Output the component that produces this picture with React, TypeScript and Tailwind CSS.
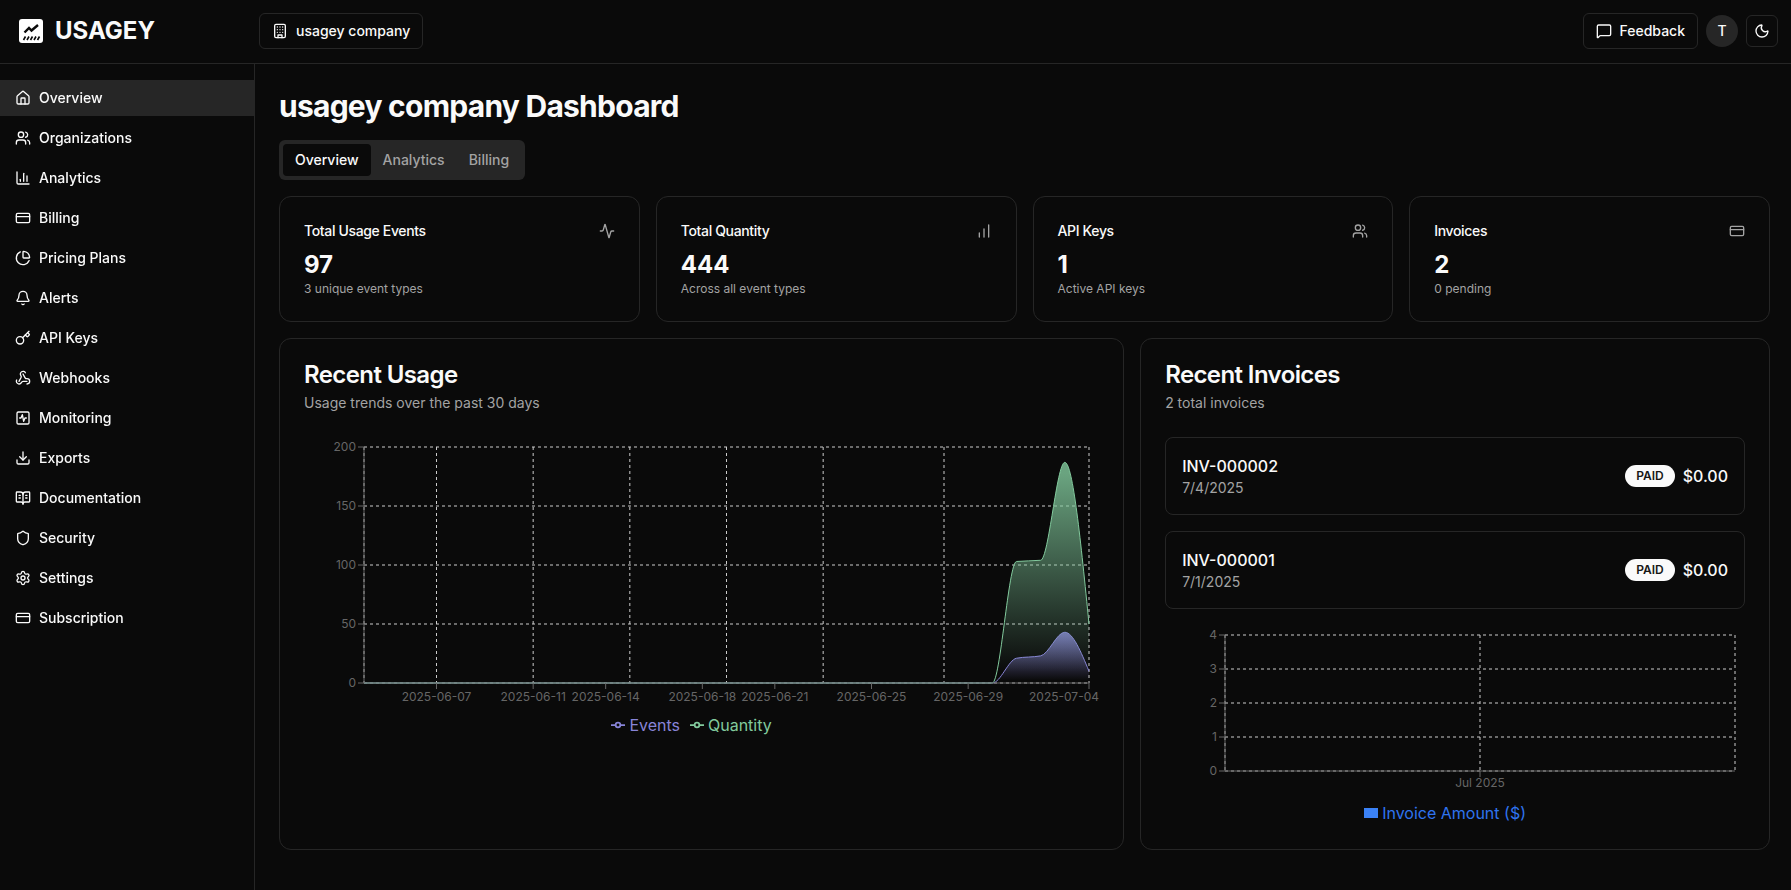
import {
  Activity,
  BarChart,
  BookOpenText,
  ChartColumn,
  ChartPie,
  CreditCard,
  Bell,
  Download,
  House,
  Key,
  MessageSquare,
  Moon,
  Settings,
  Shield,
  SquareActivity,
  Users,
  Webhook,
  type LucideIcon,
} from "lucide-react";

const navItems: { label: string; icon: LucideIcon; active?: boolean }[] = [
  { label: "Overview", icon: House, active: true },
  { label: "Organizations", icon: Users },
  { label: "Analytics", icon: ChartColumn },
  { label: "Billing", icon: CreditCard },
  { label: "Pricing Plans", icon: ChartPie },
  { label: "Alerts", icon: Bell },
  { label: "API Keys", icon: Key },
  { label: "Webhooks", icon: Webhook },
  { label: "Monitoring", icon: SquareActivity },
  { label: "Exports", icon: Download },
  { label: "Documentation", icon: BookOpenText },
  { label: "Security", icon: Shield },
  { label: "Settings", icon: Settings },
  { label: "Subscription", icon: CreditCard },
];

const stats: { title: string; value: string; note: string; icon: LucideIcon }[] = [
  { title: "Total Usage Events", value: "97", note: "3 unique event types", icon: Activity },
  { title: "Total Quantity", value: "444", note: "Across all event types", icon: BarChart },
  { title: "API Keys", value: "1", note: "Active API keys", icon: Users },
  { title: "Invoices", value: "2", note: "0 pending", icon: CreditCard },
];

const invoices = [
  { number: "INV-000002", date: "7/4/2025" },
  { number: "INV-000001", date: "7/1/2025" },
];

// usage chart geometry, same layout as a recharts 795x300 box
const plot = { left: 60, right: 785, top: 10, bottom: 246 };
const dayX = (day: number) => plot.left + ((plot.right - plot.left) * day) / 30;
const valueY = (value: number) => plot.bottom - ((plot.bottom - plot.top) * value) / 200;

const gridDays = [0, 3, 7, 11, 15, 19, 24, 30];
const tickDays = [
  { day: 3, label: "2025-06-07" },
  { day: 7, label: "2025-06-11" },
  { day: 10, label: "2025-06-14" },
  { day: 14, label: "2025-06-18" },
  { day: 17, label: "2025-06-21" },
  { day: 21, label: "2025-06-25" },
  { day: 25, label: "2025-06-29" },
];

const zeros = new Array(27).fill(0) as number[];
const eventSeries = [...zeros, 21, 23, 43, 10];
const quantitySeries = [...zeros, 103, 104, 187, 50];

// monotone cubic curve through the points (d3 curveMonotoneX)
function monotonePath(values: number[]) {
  const xs = values.map((_, i) => dayX(i));
  const ys = values.map(valueY);
  const n = xs.length;
  const slopes: number[] = [];
  for (let i = 0; i < n - 1; i++) slopes.push((ys[i + 1] - ys[i]) / (xs[i + 1] - xs[i]));
  const tangents = xs.map((_, i) => {
    if (i === 0 || i === n - 1) return NaN;
    const a = slopes[i - 1];
    const b = slopes[i];
    const p = (a + b) / 2;
    return (Math.sign(a) + Math.sign(b)) * Math.min(Math.abs(a), Math.abs(b), 0.5 * Math.abs(p)) || 0;
  });
  tangents[0] = (3 * slopes[0] - tangents[1]) / 2;
  tangents[n - 1] = (3 * slopes[n - 2] - tangents[n - 2]) / 2;
  let d = `M${xs[0]},${ys[0]}`;
  for (let i = 0; i < n - 1; i++) {
    const h = (xs[i + 1] - xs[i]) / 3;
    d += `C${xs[i] + h},${ys[i] + h * tangents[i]} ${xs[i + 1] - h},${ys[i + 1] - h * tangents[i + 1]} ${xs[i + 1]},${ys[i + 1]}`;
  }
  return d;
}

function UsageArea({ values, color, id }: { values: number[]; color: string; id: string }) {
  const line = monotonePath(values);
  return (
    <g>
      <defs>
        <linearGradient id={id} x1="0" y1="0" x2="0" y2="1">
          <stop offset="5%" stopColor={color} stopOpacity={0.8} />
          <stop offset="95%" stopColor={color} stopOpacity={0} />
        </linearGradient>
      </defs>
      <path d={`${line}L${plot.right},${plot.bottom}L${plot.left},${plot.bottom}Z`} fill={`url(#${id})`} />
      <path d={line} fill="none" stroke={color} strokeWidth={1} />
    </g>
  );
}

function UsageChart() {
  return (
    <div className="flex flex-col">
      <svg width={795} height={276} className="block" fontSize={12}>
        <g stroke="#ccc" strokeDasharray="3 3" fill="none">
          {[0, 50, 100, 150, 200].map((v) => (
            <line key={v} x1={plot.left} x2={plot.right} y1={valueY(v)} y2={valueY(v)} />
          ))}
          {gridDays.map((d) => (
            <line key={d} x1={dayX(d)} x2={dayX(d)} y1={plot.top} y2={plot.bottom} />
          ))}
        </g>
        <UsageArea values={eventSeries} color="#8884d8" id="usageEvents" />
        <UsageArea values={quantitySeries} color="#82ca9d" id="usageQuantity" />
        <g stroke="#666" fill="none">
          <line x1={plot.left} x2={plot.left} y1={plot.top} y2={plot.bottom} />
          <line x1={plot.left} x2={plot.right} y1={plot.bottom} y2={plot.bottom} />
          {[0, 50, 100, 150, 200].map((v) => (
            <line key={v} x1={plot.left - 6} x2={plot.left} y1={valueY(v)} y2={valueY(v)} />
          ))}
          {[...tickDays.map((t) => t.day), 30].map((d) => (
            <line key={d} x1={dayX(d)} x2={dayX(d)} y1={plot.bottom} y2={plot.bottom + 6} />
          ))}
        </g>
        <g fill="#666">
          {[0, 50, 100, 150, 200].map((v) => (
            <text key={v} x={plot.left - 8} y={valueY(v) + 4} textAnchor="end">
              {v}
            </text>
          ))}
          {tickDays.map((t) => (
            <text key={t.day} x={dayX(t.day)} y={plot.bottom + 18} textAnchor="middle">
              {t.label}
            </text>
          ))}
          <text x={795} y={plot.bottom + 18} textAnchor="end">
            2025-07-04
          </text>
        </g>
      </svg>
      <div className="flex h-6 items-center justify-center gap-2.5 pr-5 text-base">
        <LegendLine color="#8884d8" label="Events" textClass="text-[#8884d8]" />
        <LegendLine color="#82ca9d" label="Quantity" textClass="text-[#82ca9d]" />
      </div>
    </div>
  );
}

function LegendLine({ color, label, textClass }: { color: string; label: string; textClass: string }) {
  return (
    <span className="flex items-center gap-1">
      <svg width={14} height={14} viewBox="0 0 32 32" fill="none">
        <path d="M0 16h10.67M21.33 16H32" stroke={color} strokeWidth={4} />
        <circle cx={16} cy={16} r={5.33} stroke={color} strokeWidth={4} />
      </svg>
      <span className={textClass}>{label}</span>
    </span>
  );
}

function InvoiceChart() {
  const ys = [10, 44, 78, 112, 146];
  return (
    <div className="flex flex-col">
      <svg width={580} height={176} className="block" fontSize={12}>
        <g stroke="#ccc" strokeDasharray="3 3" fill="none">
          {ys.map((y) => (
            <line key={y} x1={60} x2={570} y1={y} y2={y} />
          ))}
          {[60, 315, 570].map((x) => (
            <line key={x} x1={x} x2={x} y1={10} y2={146} />
          ))}
        </g>
        <g stroke="#666" fill="none">
          <line x1={60} x2={60} y1={10} y2={146} />
          <line x1={60} x2={570} y1={146} y2={146} />
          <line x1={315} x2={315} y1={146} y2={152} />
          {ys.map((y) => (
            <line key={y} x1={54} x2={60} y1={y} y2={y} />
          ))}
        </g>
        <g fill="#666">
          {ys.map((y, i) => (
            <text key={y} x={52} y={y + 4} textAnchor="end">
              {4 - i}
            </text>
          ))}
          <text x={315} y={162} textAnchor="middle">
            Jul 2025
          </text>
        </g>
      </svg>
      <div className="flex h-6 items-center justify-center gap-1 pr-5 text-base text-[#2f74f0]">
        <span className="h-[10.5px] w-3.5 bg-[#3b82f6]" />
        <span>Invoice Amount ($)</span>
      </div>
    </div>
  );
}

function Logo() {
  return (
    <svg width={24} height={24} viewBox="0 0 24 24" className="shrink-0">
      <rect width={24} height={24} rx={3} fill="#fff" />
      <path d="M5.5 13.5 10 9l2.5 2.5L19 6" fill="none" stroke="#0a0a0a" strokeWidth={2.4} />
      <path
        d="M4.5 21 6.5 17.5M8 21l2-3.5M11.5 21l2-3.5M15 21l2-3.5M18.5 21l2-3.5"
        fill="none"
        stroke="#0a0a0a"
        strokeWidth={1.6}
      />
    </svg>
  );
}

function BuildingIcon() {
  return (
    <svg
      width={16}
      height={16}
      viewBox="0 0 24 24"
      fill="none"
      stroke="currentColor"
      strokeWidth={2}
      strokeLinecap="round"
      strokeLinejoin="round"
    >
      <rect width={16} height={20} x={4} y={2} rx={2} ry={2} />
      <path d="M9 22v-4h6v4" />
      <path d="M8 6h.01M12 6h.01M16 6h.01M8 10h.01M12 10h.01M16 10h.01M8 14h.01M12 14h.01M16 14h.01" />
    </svg>
  );
}

export default function App() {
  return (
    <div className="flex h-screen flex-col overflow-hidden bg-[#0a0a0a] text-[#fafafa] [font-family:Inter,sans-serif]">
      <header className="flex h-16 shrink-0 items-center justify-between border-b border-[#262626] pb-px pl-[19px] pr-[13px]">
        <div className="flex items-center">
          <div className="flex w-[240px] items-center gap-3">
            <Logo />
            <span className="text-2xl font-bold">USAGEY</span>
          </div>
          <button className="flex h-9 items-center gap-2 rounded-md border border-[#262626] px-[12px] text-sm font-medium">
            <BuildingIcon />
            usagey company
          </button>
        </div>
        <div className="flex items-center gap-2">
          <button className="flex h-9 items-center gap-2 rounded-md border border-[#262626] px-3 text-sm font-medium">
            <MessageSquare className="h-4 w-4" />
            Feedback
          </button>
          <div className="flex h-8 w-8 items-center justify-center rounded-full bg-[#262626] text-sm font-medium">T</div>
          <button className="flex h-8 w-8 items-center justify-center rounded-md border border-[#262626]">
            <Moon className="h-4 w-4" />
          </button>
        </div>
      </header>

      <div className="flex min-h-0 flex-1">
        <aside className="w-[255px] shrink-0 border-r border-[#262626] pt-4">
          <nav className="flex flex-col gap-1 will-change-transform">
            {navItems.map((item) => (
              <a
                key={item.label}
                className={`flex h-9 items-center gap-2 px-[15px] text-sm font-medium ${item.active ? "bg-[#262626]" : ""}`}
              >
                <item.icon className="h-4 w-4" />
                {item.label}
              </a>
            ))}
          </nav>
        </aside>

        <main className="min-w-0 flex-1 pl-6 pr-[21px] pt-6">
          <h1 className="mb-4 text-3xl font-bold tracking-tight">usagey company Dashboard</h1>

          <div className="mb-4 inline-flex h-10 items-center rounded-md bg-[#262626] p-1 text-sm font-medium text-[#a3a3a3]">
            <span className="flex h-8 items-center rounded-sm bg-[#0a0a0a] px-3 text-[#fafafa]">Overview</span>
            <span className="flex h-8 items-center px-3">Analytics</span>
            <span className="flex h-8 items-center px-3">Billing</span>
          </div>

          <div className="grid grid-cols-4 gap-4">
            {stats.map((stat) => (
              <div key={stat.title} className="rounded-xl border border-[#262626] p-6">
                <div className="flex items-center justify-between pb-2">
                  <h3 className="text-sm font-medium tracking-tight">{stat.title}</h3>
                  <stat.icon className="h-4 w-4 text-[#a3a3a3]" />
                </div>
                <div className="text-2xl font-bold">{stat.value}</div>
                <p className="text-xs text-[#a3a3a3]">{stat.note}</p>
              </div>
            ))}
          </div>

          <div className="mt-4 grid grid-cols-7 gap-4">
            <div className="col-span-4 flex flex-col gap-6 rounded-xl border border-[#262626] p-6">
              <div className="flex flex-col gap-1.5">
                <h2 className="text-2xl font-semibold leading-none tracking-tight">Recent Usage</h2>
                <p className="text-sm text-[#a3a3a3]">Usage trends over the past 30 days</p>
              </div>
              <UsageChart />
            </div>

            <div className="col-span-3 flex flex-col gap-6 rounded-xl border border-[#262626] p-6">
              <div className="flex flex-col gap-1.5">
                <h2 className="text-2xl font-semibold leading-none tracking-tight">Recent Invoices</h2>
                <p className="text-sm text-[#a3a3a3]">2 total invoices</p>
              </div>
              <div className="flex flex-col gap-4">
                {invoices.map((invoice) => (
                  <div
                    key={invoice.number}
                    className="flex items-center justify-between rounded-lg border border-[#262626] p-4"
                  >
                    <div>
                      <div className="font-medium">{invoice.number}</div>
                      <div className="text-sm text-[#a3a3a3]">{invoice.date}</div>
                    </div>
                    <div className="flex items-center gap-2">
                      <span className="rounded-full border border-transparent bg-[#fafafa] px-2.5 py-0.5 text-xs font-semibold text-[#171717]">
                        PAID
                      </span>
                      <span className="font-medium">$0.00</span>
                    </div>
                  </div>
                ))}
                <InvoiceChart />
              </div>
            </div>
          </div>
        </main>
      </div>
    </div>
  );
}
